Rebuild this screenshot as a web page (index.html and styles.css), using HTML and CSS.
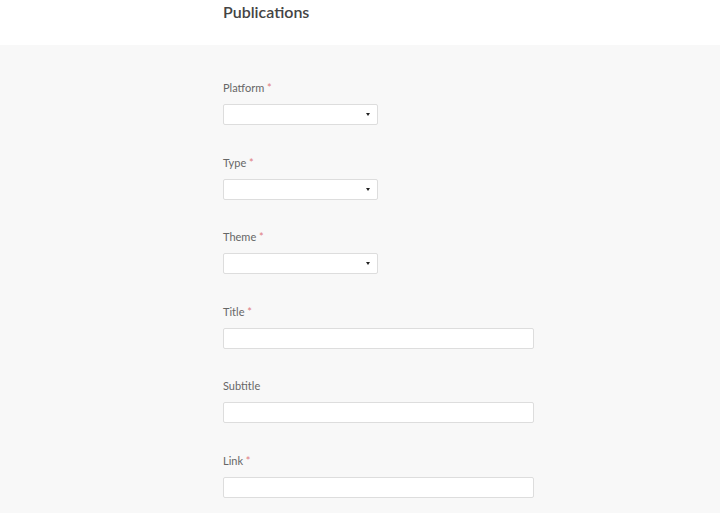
FILE: index.html
```html
<!DOCTYPE html>
<html lang="en">
<head>
  <meta charset="UTF-8">
  <title>Publications</title>
  <meta name="viewport" content="width=device-width, initial-scale=1">
  <link rel="stylesheet" href="styles.css">
</head>
<body>

<header class="page-header">
  <div class="inner">
    <h1>Publications</h1>
  </div>
</header>

<main class="page-body">
  <form class="inner pub-form">
    <div class="field">
      <label for="platform">Platform <span class="req">*</span></label>
      <div class="select-wrap">
        <select id="platform" name="platform" required></select>
      </div>
    </div>

    <div class="field">
      <label for="type">Type <span class="req">*</span></label>
      <div class="select-wrap">
        <select id="type" name="type" required></select>
      </div>
    </div>

    <div class="field">
      <label for="theme">Theme <span class="req">*</span></label>
      <div class="select-wrap">
        <select id="theme" name="theme" required></select>
      </div>
    </div>

    <div class="field">
      <label for="title">Title <span class="req">*</span></label>
      <input type="text" id="title" name="title" required>
    </div>

    <div class="field">
      <label for="subtitle">Subtitle</label>
      <input type="text" id="subtitle" name="subtitle">
    </div>

    <div class="field">
      <label for="link">Link <span class="req">*</span></label>
      <input type="text" id="link" name="link" required>
    </div>
  </form>
</main>

</body>
</html>
```

FILE: styles.css
```css
body {
  margin: 0;
  font-family: Lato, 'Open Sans', sans-serif;
  background-color: #f8f8f8;
  color: #555;
}
.inner {
  width: 311px;
  margin-left: 223px;
}
.page-header {
  background: #fff;
  height: 45px;
}
.page-header h1 {
  margin: 0;
  padding-top: 2px;
  font-size: 16px;
  line-height: 20px;
  font-weight: 600;
  color: #444;
}
.page-body {
  padding-top: 35px;
  padding-bottom: 30px;
}
.field {
  margin-bottom: 29.5px;
}
.field label {
  display: block;
  font-size: 11px;
  line-height: 16px;
  margin-bottom: 8px;
  color: #666;
}
.req {
  color: #e07a80;
}
.field input,
.field select {
  display: block;
  box-sizing: border-box;
  height: 21px;
  margin: 0;
  border: 1px solid #ddd;
  border-radius: 2px;
  background: #fff;
  font: inherit;
  font-size: 11px;
}
.field input {
  width: 311px;
}
.select-wrap {
  position: relative;
  width: 155px;
}
.field select {
  width: 155px;
  appearance: none;
  -webkit-appearance: none;
}
.select-wrap::after {
  content: "";
  position: absolute;
  right: 8px;
  top: 9px;
  border-left: 2.5px solid transparent;
  border-right: 2.5px solid transparent;
  border-top: 3px solid #222;
}
```
